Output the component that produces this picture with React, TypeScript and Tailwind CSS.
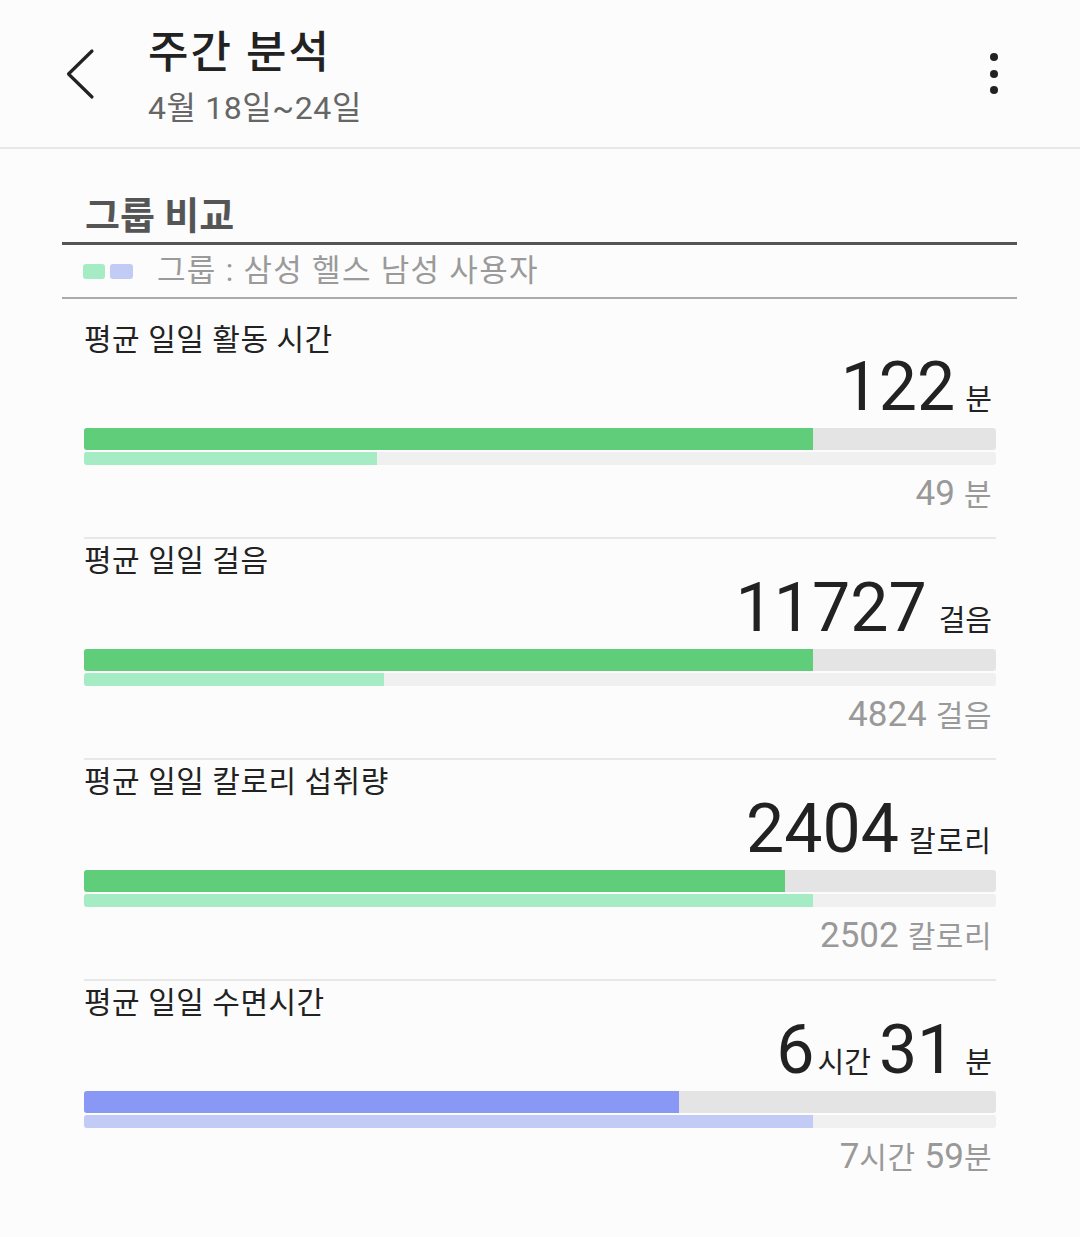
import React from 'react';

type Section = {
  label: string;
  value: React.ReactNode;
  compare: React.ReactNode;
  a: number;
  b: number;
  blue?: boolean;
};

const Num = ({ children, className = '' }: { children: React.ReactNode; className?: string }) => (
  <span className={`text-[68px] text-[#222] ${className}`}>{children}</span>
);
const Unit = ({ children, className = '' }: { children: React.ReactNode; className?: string }) => (
  <span className={`text-[29px] text-[#222] ${className}`}>{children}</span>
);
const CNum = ({ children, className = '' }: { children: React.ReactNode; className?: string }) => (
  <span className={`text-[35px] ${className}`}>{children}</span>
);
const CUnit = ({ children, className = '' }: { children: React.ReactNode; className?: string }) => (
  <span className={`text-[30px] tracking-[0.5px] ${className}`}>{children}</span>
);

const sections: Section[] = [
  {
    label: '평균 일일 활동 시간',
    value: (
      <>
        <Num>122</Num>
        <Unit className="ml-[10px]">분</Unit>
      </>
    ),
    compare: (
      <>
        <CNum>49</CNum>
        <CUnit className="ml-[9px]">분</CUnit>
      </>
    ),
    a: 729,
    b: 293,
  },
  {
    label: '평균 일일 걸음',
    value: (
      <>
        <Num>11727</Num>
        <Unit className="ml-[12px]">걸음</Unit>
      </>
    ),
    compare: (
      <>
        <CNum>4824</CNum>
        <CUnit className="ml-[9px]">걸음</CUnit>
      </>
    ),
    a: 729,
    b: 300,
  },
  {
    label: '평균 일일 칼로리 섭취량',
    value: (
      <>
        <Num>2404</Num>
        <Unit className="ml-[10px] tracking-[1px]">칼로리</Unit>
      </>
    ),
    compare: (
      <>
        <CNum>2502</CNum>
        <CUnit className="ml-[9px]">칼로리</CUnit>
      </>
    ),
    a: 701,
    b: 729,
  },
  {
    label: '평균 일일 수면시간',
    value: (
      <>
        <Num>6</Num>
        <Unit className="ml-[3px]">시간</Unit>
        <Num className="ml-[8px]">31</Num>
        <Unit className="ml-[10px]">분</Unit>
      </>
    ),
    compare: (
      <>
        <CNum>7</CNum>
        <CUnit>시간</CUnit>
        <CNum className="ml-[9px]">59</CNum>
        <CUnit>분</CUnit>
      </>
    ),
    a: 595,
    b: 729,
    blue: true,
  },
];

export default function App() {
  return (
    <div className="min-h-[1237px] w-full bg-[#fcfcfc] font-[Roboto,'Noto_Sans_CJK_KR',sans-serif] text-[#222]">
      {/* Header */}
      <header className="flex h-[149px] border-b-2 border-[#e8e8e8]">
        <div className="w-[148px] shrink-0 pl-[65px] pt-[48px]">
          <svg width="30" height="52" viewBox="0 0 30 52" fill="none">
            <polyline
              points="27,3 3.5,26 27,49"
              stroke="#222"
              strokeWidth="3.2"
              strokeLinecap="round"
              strokeLinejoin="round"
            />
          </svg>
        </div>
        <div className="flex-1 pt-[27px]">
          <div className="text-[44px] leading-[52px] font-medium tracking-[2px] text-[#222]">주간 분석</div>
          <div className="mt-[9px] text-[32px] leading-[40px] tracking-[0.6px] text-[#666]">4월 18일~24일</div>
        </div>
        <div className="flex w-[172px] shrink-0 flex-col items-start pl-[82px] pt-[53px] gap-[8.5px]">
          <span className="h-[8px] w-[8px] rounded-full bg-[#222]" />
          <span className="h-[8px] w-[8px] rounded-full bg-[#222]" />
          <span className="h-[8px] w-[8px] rounded-full bg-[#222]" />
        </div>
      </header>

      {/* Group comparison heading */}
      <div className="ml-[62px] mr-[63px]">
        <div className="mt-[44px] border-b-[3px] border-[#555] pb-[3px] pl-[23px] text-[38px] leading-[46px] font-bold text-[#555]">
          그룹 비교
        </div>
        <div className="flex h-[54px] items-center border-b-2 border-[#aaa] pl-[21px]">
          <span className="h-[15px] w-[22px] rounded-[3px] bg-[#a5ebc3]" />
          <span className="ml-[5px] h-[15px] w-[23px] rounded-[3px] bg-[#c2cbf5]" />
          <span className="ml-[24px] text-[31px] leading-[36px] tracking-[1.3px] text-[#9a9a9a]">
            그룹 : 삼성 헬스 남성 사용자
          </span>
        </div>
      </div>

      {/* Sections */}
      <div className="mx-[84px] mt-[17px]">
        {sections.map((s, i) => (
          <div
            key={s.label}
            className={
              i === 0
                ? 'pt-[6px] pb-[23px]'
                : 'border-t-2 border-[#e8e8e8] pt-[4px] pb-[23px]'
            }
          >
            <div className="text-[30px] leading-[36px] tracking-[0.5px] text-[#222]">{s.label}</div>
            <div className="flex h-[58px] items-baseline justify-end pr-[4px] leading-[58px]">
              {s.value}
            </div>
            <div className="mt-[12px] h-[22px] overflow-hidden rounded-[3px] bg-[#e4e4e4]">
              <div
                className={s.blue ? 'h-full bg-[#8898f4]' : 'h-full bg-[#60cd7a]'}
                style={{ width: `${(s.a / 912) * 100}%` }}
              />
            </div>
            <div className="mt-[2px] h-[13px] overflow-hidden rounded-[3px] bg-[#f0f0f0]">
              <div
                className={s.blue ? 'h-full bg-[#c2cbf5]' : 'h-full bg-[#a5ebc3]'}
                style={{ width: `${(s.b / 912) * 100}%` }}
              />
            </div>
            <div className="mt-[9px] flex h-[40px] items-baseline justify-end pr-[4px] leading-[40px] text-[#999]">
              {s.compare}
            </div>
          </div>
        ))}
      </div>
    </div>
  );
}
